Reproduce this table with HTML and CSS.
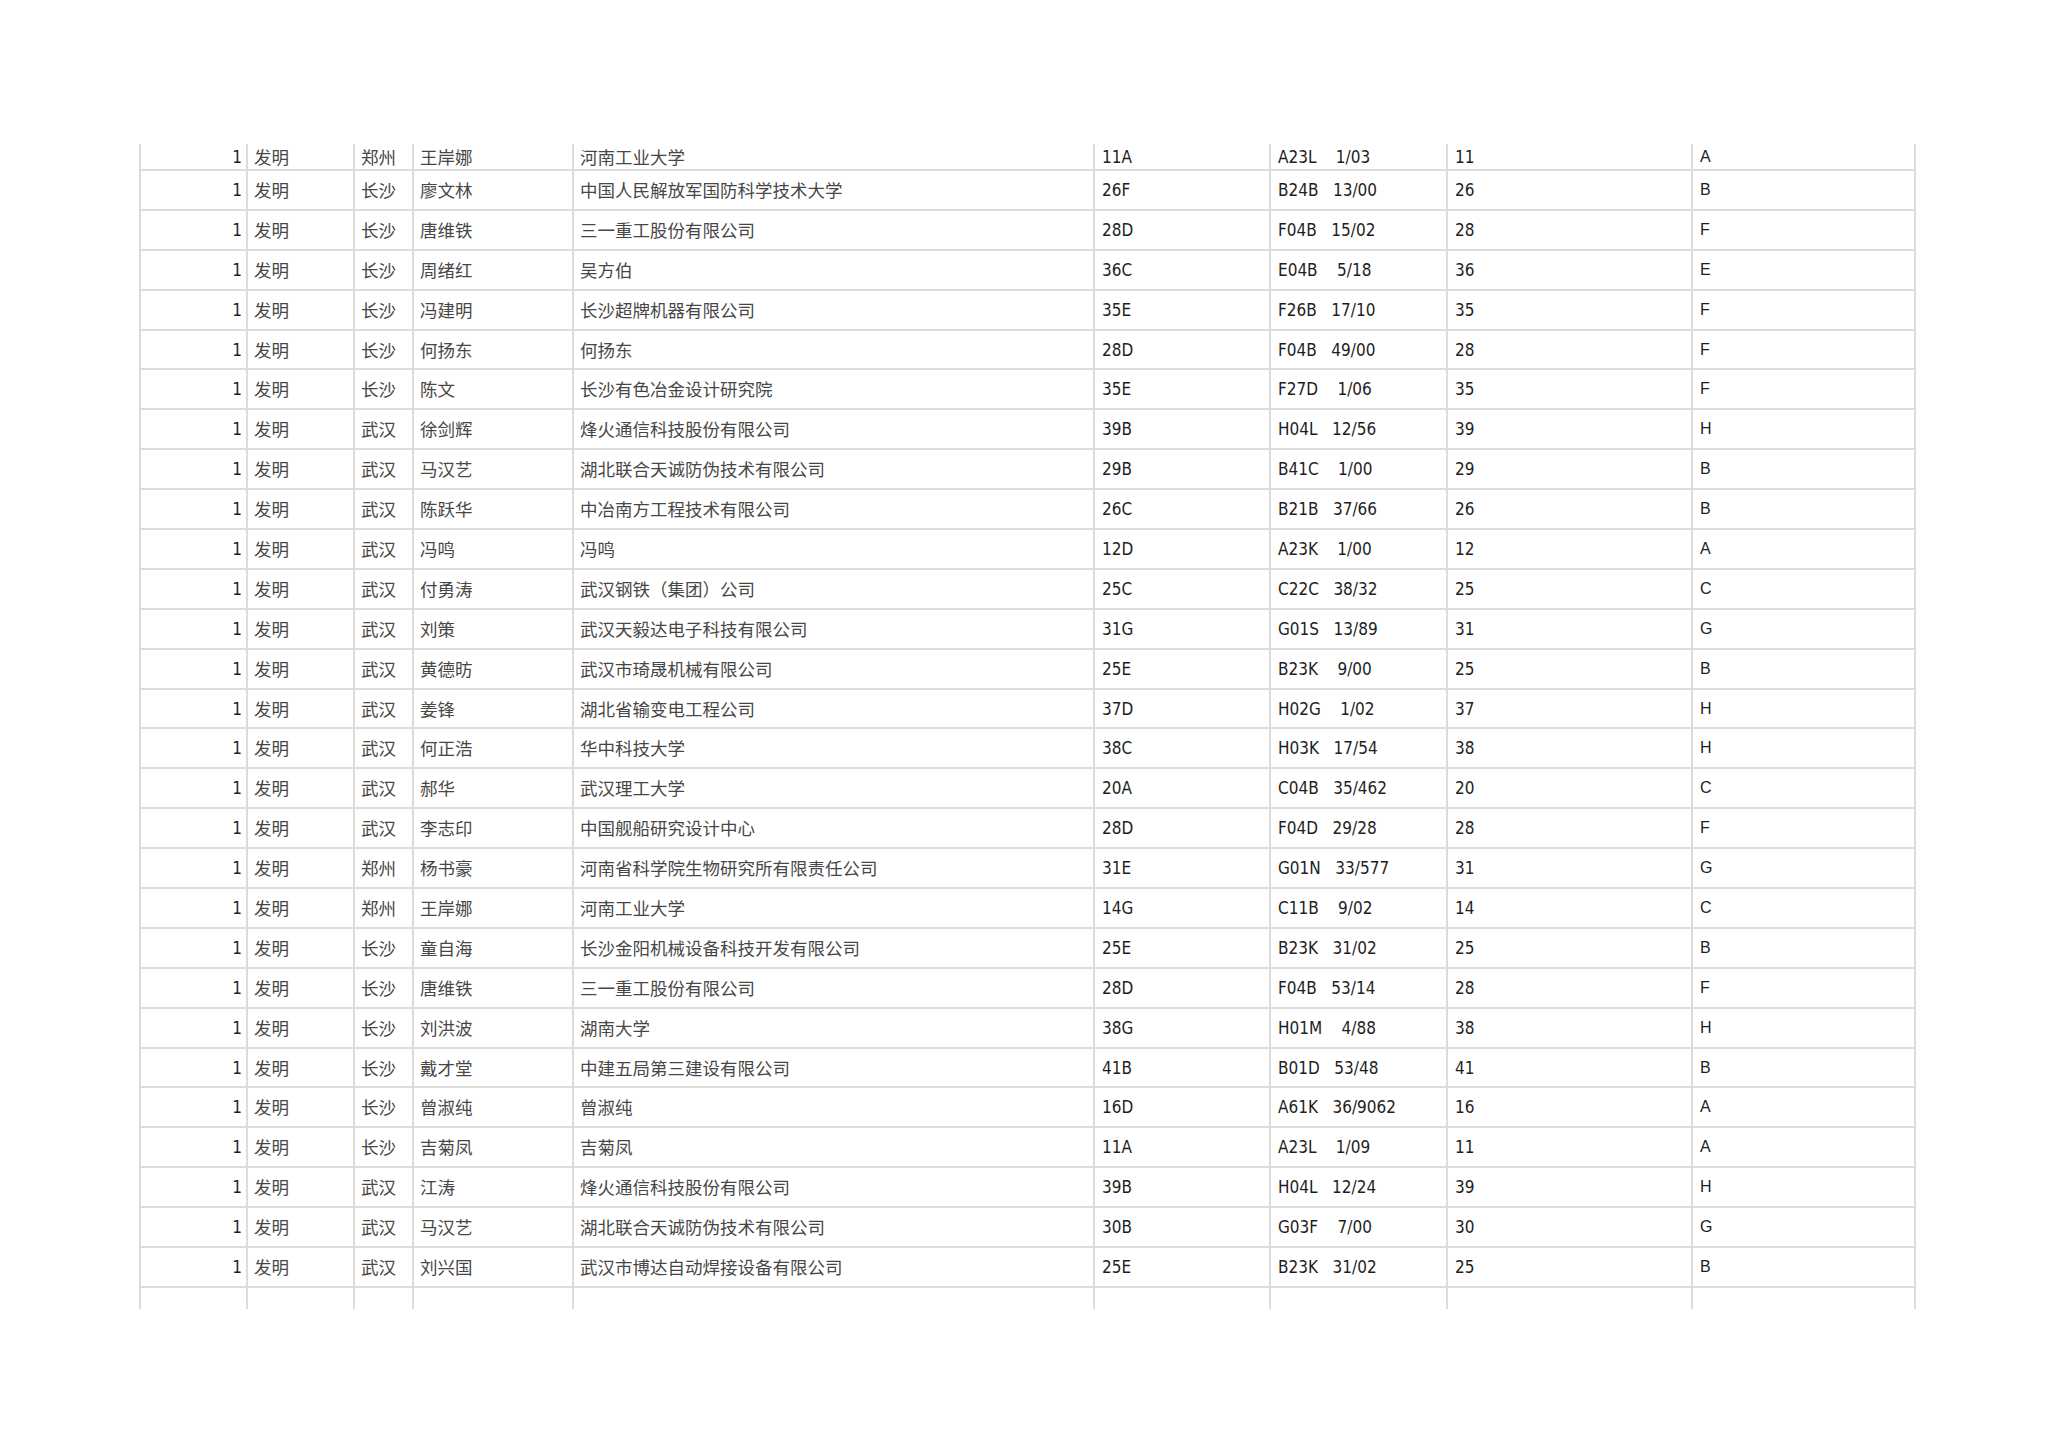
FILE: index.html
```html
<!DOCTYPE html>
<html lang="zh-CN">
<head>
<meta charset="utf-8">
<title>专利表</title>
<link rel="stylesheet" href="styles.css">
</head>
<body>
<div class="page">
<table class="sheet">
<colgroup>
<col class="c1"><col class="c2"><col class="c3"><col class="c4"><col class="c5"><col class="c6"><col class="c7"><col class="c8"><col class="c9">
</colgroup>
<tbody>
<tr class="first"><td class="n">1</td><td>发明</td><td>郑州</td><td>王岸娜</td><td>河南工业大学</td><td class="v">11A</td><td class="v">A23L    1/03</td><td class="v">11</td><td class="a">A</td></tr>
<tr><td class="n">1</td><td>发明</td><td>长沙</td><td>廖文林</td><td>中国人民解放军国防科学技术大学</td><td class="v">26F</td><td class="v">B24B   13/00</td><td class="v">26</td><td class="a">B</td></tr>
<tr><td class="n">1</td><td>发明</td><td>长沙</td><td>唐维铁</td><td>三一重工股份有限公司</td><td class="v">28D</td><td class="v">F04B   15/02</td><td class="v">28</td><td class="a">F</td></tr>
<tr><td class="n">1</td><td>发明</td><td>长沙</td><td>周绪红</td><td>吴方伯</td><td class="v">36C</td><td class="v">E04B    5/18</td><td class="v">36</td><td class="a">E</td></tr>
<tr><td class="n">1</td><td>发明</td><td>长沙</td><td>冯建明</td><td>长沙超牌机器有限公司</td><td class="v">35E</td><td class="v">F26B   17/10</td><td class="v">35</td><td class="a">F</td></tr>
<tr><td class="n">1</td><td>发明</td><td>长沙</td><td>何扬东</td><td>何扬东</td><td class="v">28D</td><td class="v">F04B   49/00</td><td class="v">28</td><td class="a">F</td></tr>
<tr><td class="n">1</td><td>发明</td><td>长沙</td><td>陈文</td><td>长沙有色冶金设计研究院</td><td class="v">35E</td><td class="v">F27D    1/06</td><td class="v">35</td><td class="a">F</td></tr>
<tr><td class="n">1</td><td>发明</td><td>武汉</td><td>徐剑辉</td><td>烽火通信科技股份有限公司</td><td class="v">39B</td><td class="v">H04L   12/56</td><td class="v">39</td><td class="a">H</td></tr>
<tr><td class="n">1</td><td>发明</td><td>武汉</td><td>马汉艺</td><td>湖北联合天诚防伪技术有限公司</td><td class="v">29B</td><td class="v">B41C    1/00</td><td class="v">29</td><td class="a">B</td></tr>
<tr><td class="n">1</td><td>发明</td><td>武汉</td><td>陈跃华</td><td>中冶南方工程技术有限公司</td><td class="v">26C</td><td class="v">B21B   37/66</td><td class="v">26</td><td class="a">B</td></tr>
<tr><td class="n">1</td><td>发明</td><td>武汉</td><td>冯鸣</td><td>冯鸣</td><td class="v">12D</td><td class="v">A23K    1/00</td><td class="v">12</td><td class="a">A</td></tr>
<tr><td class="n">1</td><td>发明</td><td>武汉</td><td>付勇涛</td><td>武汉钢铁（集团）公司</td><td class="v">25C</td><td class="v">C22C   38/32</td><td class="v">25</td><td class="a">C</td></tr>
<tr><td class="n">1</td><td>发明</td><td>武汉</td><td>刘策</td><td>武汉天毅达电子科技有限公司</td><td class="v">31G</td><td class="v">G01S   13/89</td><td class="v">31</td><td class="a">G</td></tr>
<tr><td class="n">1</td><td>发明</td><td>武汉</td><td>黄德昉</td><td>武汉市琦晟机械有限公司</td><td class="v">25E</td><td class="v">B23K    9/00</td><td class="v">25</td><td class="a">B</td></tr>
<tr><td class="n">1</td><td>发明</td><td>武汉</td><td>姜锋</td><td>湖北省输变电工程公司</td><td class="v">37D</td><td class="v">H02G    1/02</td><td class="v">37</td><td class="a">H</td></tr>
<tr><td class="n">1</td><td>发明</td><td>武汉</td><td>何正浩</td><td>华中科技大学</td><td class="v">38C</td><td class="v">H03K   17/54</td><td class="v">38</td><td class="a">H</td></tr>
<tr><td class="n">1</td><td>发明</td><td>武汉</td><td>郝华</td><td>武汉理工大学</td><td class="v">20A</td><td class="v">C04B   35/462</td><td class="v">20</td><td class="a">C</td></tr>
<tr><td class="n">1</td><td>发明</td><td>武汉</td><td>李志印</td><td>中国舰船研究设计中心</td><td class="v">28D</td><td class="v">F04D   29/28</td><td class="v">28</td><td class="a">F</td></tr>
<tr><td class="n">1</td><td>发明</td><td>郑州</td><td>杨书豪</td><td>河南省科学院生物研究所有限责任公司</td><td class="v">31E</td><td class="v">G01N   33/577</td><td class="v">31</td><td class="a">G</td></tr>
<tr><td class="n">1</td><td>发明</td><td>郑州</td><td>王岸娜</td><td>河南工业大学</td><td class="v">14G</td><td class="v">C11B    9/02</td><td class="v">14</td><td class="a">C</td></tr>
<tr><td class="n">1</td><td>发明</td><td>长沙</td><td>童自海</td><td>长沙金阳机械设备科技开发有限公司</td><td class="v">25E</td><td class="v">B23K   31/02</td><td class="v">25</td><td class="a">B</td></tr>
<tr><td class="n">1</td><td>发明</td><td>长沙</td><td>唐维铁</td><td>三一重工股份有限公司</td><td class="v">28D</td><td class="v">F04B   53/14</td><td class="v">28</td><td class="a">F</td></tr>
<tr><td class="n">1</td><td>发明</td><td>长沙</td><td>刘洪波</td><td>湖南大学</td><td class="v">38G</td><td class="v">H01M    4/88</td><td class="v">38</td><td class="a">H</td></tr>
<tr><td class="n">1</td><td>发明</td><td>长沙</td><td>戴才堂</td><td>中建五局第三建设有限公司</td><td class="v">41B</td><td class="v">B01D   53/48</td><td class="v">41</td><td class="a">B</td></tr>
<tr><td class="n">1</td><td>发明</td><td>长沙</td><td>曾淑纯</td><td>曾淑纯</td><td class="v">16D</td><td class="v">A61K   36/9062</td><td class="v">16</td><td class="a">A</td></tr>
<tr><td class="n">1</td><td>发明</td><td>长沙</td><td>吉菊凤</td><td>吉菊凤</td><td class="v">11A</td><td class="v">A23L    1/09</td><td class="v">11</td><td class="a">A</td></tr>
<tr><td class="n">1</td><td>发明</td><td>武汉</td><td>江涛</td><td>烽火通信科技股份有限公司</td><td class="v">39B</td><td class="v">H04L   12/24</td><td class="v">39</td><td class="a">H</td></tr>
<tr><td class="n">1</td><td>发明</td><td>武汉</td><td>马汉艺</td><td>湖北联合天诚防伪技术有限公司</td><td class="v">30B</td><td class="v">G03F    7/00</td><td class="v">30</td><td class="a">G</td></tr>
<tr><td class="n">1</td><td>发明</td><td>武汉</td><td>刘兴国</td><td>武汉市博达自动焊接设备有限公司</td><td class="v">25E</td><td class="v">B23K   31/02</td><td class="v">25</td><td class="a">B</td></tr>
<tr class="last"><td></td><td></td><td></td><td></td><td></td><td></td><td></td><td></td><td></td></tr>
</tbody>
</table>
</div>
</body>
</html>
```

FILE: styles.css
```css
html, body {
  margin: 0;
  padding: 0;
  background: #ffffff;
}

.page {
  padding: 144px 0 0 139px;
}

.sheet {
  border-collapse: collapse;
  table-layout: fixed;
  width: 1775px;
  font-family: "Noto Sans CJK SC", "Noto Sans", sans-serif;
  font-size: 17.5px;
  color: #474747;
}

.c1 { width: 107px; }
.c2 { width: 107px; }
.c3 { width: 59px; }
.c4 { width: 160px; }
.c5 { width: 521px; }
.c6 { width: 176px; }
.c7 { width: 177px; }
.c8 { width: 245px; }
.c9 { width: 223px; }

.sheet td {
  border-left: 2px solid #dcdcd8;
  border-right: 2px solid #dcdcd8;
  border-top: 2px solid #dcdcd8;
  padding: 0 6px;
  height: 37.9px;
  line-height: 20px;
  vertical-align: middle;
  white-space: pre;
  overflow: hidden;
}

.sheet tr.first td {
  border-top: none;
  height: 25px;
}

.sheet tr.last td {
  height: 21px;
}

.sheet td.n {
  text-align: right;
  padding-right: 4px;
  font-family: "DejaVu Sans Condensed", "DejaVu Sans", sans-serif;
  font-size: 17px;
  color: #1e1e1e;
}

.sheet td.v {
  font-family: "DejaVu Sans Condensed", "DejaVu Sans", sans-serif;
  font-size: 17px;
  color: #1e1e1e;
  padding-left: 7px;
}

.sheet td.a {
  font-family: "Liberation Sans", Arial, sans-serif;
  font-size: 16px;
  color: #1e1e1e;
  padding-left: 7px;
}
```
